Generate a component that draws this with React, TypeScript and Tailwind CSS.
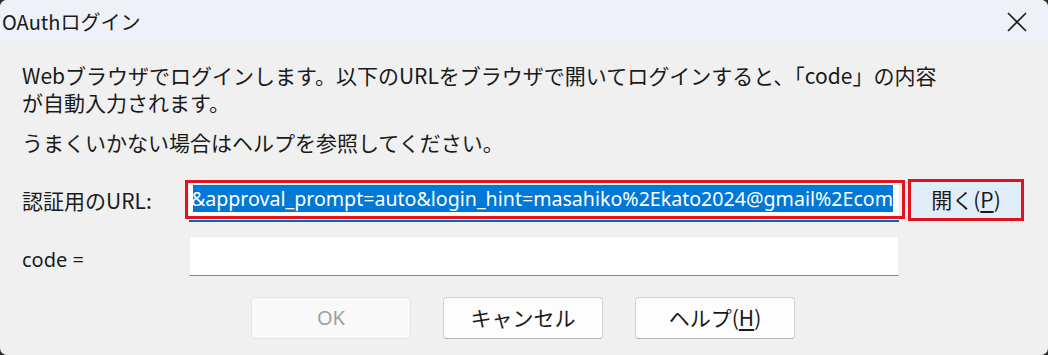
const jp = "font-['Noto_Sans_CJK_JP','Noto_Sans',sans-serif]";

const App = () => {
  return (
    <div className="h-[355px] w-[1048px] overflow-hidden bg-[#2b2b2b]">
      <div className={`flex h-full flex-col overflow-hidden rounded-[7px] bg-[#f0f0f0] text-[#1a1a1a] ${jp}`}>
        {/* title bar */}
        <div className="flex h-[43px] items-center justify-between bg-[#eff1f8] pl-[2px] pr-[20px]">
          <span className="text-[20px] leading-none text-[#1b1b1b]">OAuthログイン</span>
          <svg width="20" height="20" viewBox="0 0 20 20" className="mr-[1px]">
            <path d="M1 1L19 19M19 1L1 19" stroke="#1b1b1b" strokeWidth="1.6" fill="none" />
          </svg>
        </div>

        <div className="pl-[22px]">
          <p className="mt-[19px] text-[21px] leading-[27px]">
            Webブラウザでログインします。以下のURLをブラウザで開いてログインすると、「code」の内容
            <br />
            が自動入力されます。
          </p>
          <p className="mt-[13px] text-[21px] leading-[27px]">うまくいかない場合はヘルプを参照してください。</p>

          {/* URL row */}
          <div className="mt-[23px] flex h-[43px] items-start">
            <div className="flex h-[43px] w-[167px] items-center text-[21px]">認証用のURL:</div>
            <div className="relative mt-[3px] h-[40px] w-[710px] border-b-2 border-[#0067c0] bg-white">
              <div className="absolute left-[4px] top-[3px] flex h-[27px] w-[700px] justify-end overflow-hidden bg-[#0078d7]">
                <span className="whitespace-nowrap font-['Noto_Sans',sans-serif] text-[19.6px] leading-[27px] text-white">
                  &amp;approval_prompt=auto&amp;login_hint=masahiko%2Ekato2024@gmail%2Ecom
                </span>
              </div>
              <div className="pointer-events-none absolute -left-[4px] -top-[2px] h-[39px] w-[720px] border-[3px] border-[#e3121b]" />
            </div>
            <div className="relative ml-[9px] h-[42px] w-[116px]">
              <button
                type="button"
                className="flex h-full w-full items-center justify-center bg-[#e0eef9] text-[21px] text-[#1a1a1a]"
              >
                開く(<span className="underline underline-offset-[3px]">P</span>)
              </button>
              <div className="pointer-events-none absolute inset-0 border-[3px] border-[#e3121b]" />
            </div>
          </div>

          {/* code row */}
          <div className="mt-[14px] flex h-[40px] items-center">
            <div className="w-[167px] pt-[8px] font-['Noto_Sans',sans-serif] text-[20px]">code =</div>
            <div className="h-[40px] w-[710px] border border-b-[#868686] border-l-[#ececec] border-r-[#ececec] border-t-[#ececec] bg-white" />
          </div>

          {/* buttons */}
          <div className="mt-[21px] flex gap-[32px] pl-[229px]">
            <button
              type="button"
              disabled
              className="flex h-[42px] w-[160px] items-center justify-center rounded-[4px] border border-[#e5e5e5] bg-[#f9f9f9] font-['Noto_Sans',sans-serif] text-[20px] text-[#9e9e9e]"
            >
              OK
            </button>
            <button
              type="button"
              className="flex h-[42px] w-[160px] items-center justify-center rounded-[4px] border border-[#d0d0d0] border-b-[#b5b5b5] bg-[#fdfdfd] text-[21px] text-[#1a1a1a]"
            >
              キャンセル
            </button>
            <button
              type="button"
              className="flex h-[42px] w-[160px] items-center justify-center rounded-[4px] border border-[#d0d0d0] border-b-[#b5b5b5] bg-[#fdfdfd] text-[21px] text-[#1a1a1a]"
            >
              ヘルプ(<span className="underline underline-offset-[3px]">H</span>)
            </button>
          </div>
        </div>
      </div>
    </div>
  );
};

export default App;
